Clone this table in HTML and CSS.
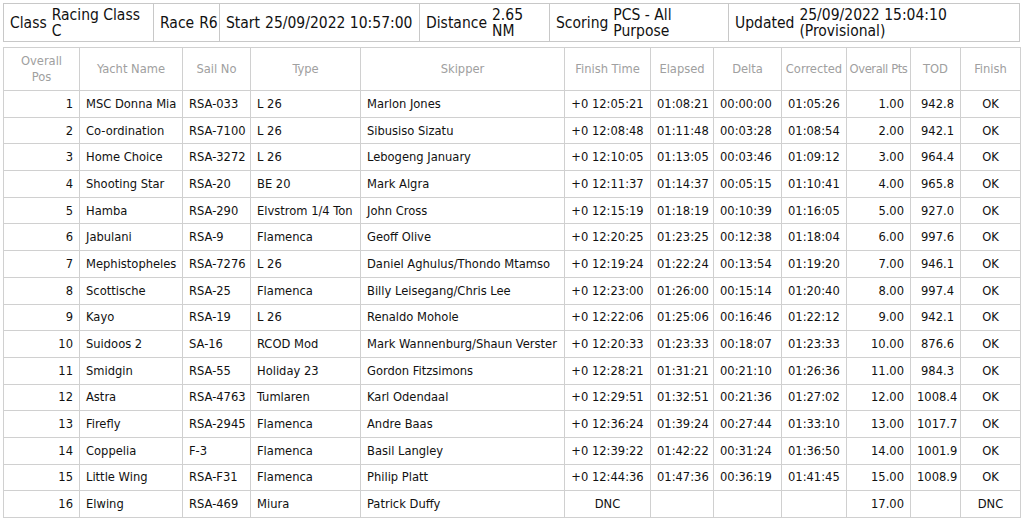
FILE: index.html
```html
<!DOCTYPE html>
<html>
<head>
<meta charset="utf-8">
<link rel="stylesheet" href="styles.css">
</head>
<body>
<div class="info">
  <div class="info-cell c-class"><span class="lbl">Class</span><span class="val">Racing Class C</span></div>
  <div class="info-cell c-race"><span class="lbl">Race</span><span class="val">R6</span></div>
  <div class="info-cell c-start"><span class="lbl">Start</span><span class="val">25/09/2022 10:57:00</span></div>
  <div class="info-cell c-dist"><span class="lbl">Distance</span><span class="val">2.65 NM</span></div>
  <div class="info-cell c-scor"><span class="lbl">Scoring</span><span class="val">PCS - All Purpose</span></div>
  <div class="info-cell c-upd"><span class="lbl">Updated</span><span class="val">25/09/2022 15:04:10 (Provisional)</span></div>
</div>
<table class="results">
  <colgroup>
    <col class="w76"><col class="w103"><col class="w68"><col class="w110"><col class="w204"><col class="w86"><col class="w63"><col class="w68"><col class="w65"><col class="w64"><col class="w50"><col class="w60">
  </colgroup>
  <thead>
    <tr><th class="wrap">Overall Pos</th><th>Yacht Name</th><th>Sail No</th><th>Type</th><th>Skipper</th><th>Finish Time</th><th>Elapsed</th><th>Delta</th><th>Corrected</th><th class="nw">Overall Pts</th><th>TOD</th><th>Finish</th></tr>
  </thead>
  <tbody>
    <tr><td class="r">1</td><td>MSC Donna Mia</td><td>RSA-033</td><td>L 26</td><td>Marlon Jones</td><td class="c">+0 12:05:21</td><td>01:08:21</td><td>00:00:00</td><td>01:05:26</td><td class="r">1.00</td><td class="r">942.8</td><td class="c">OK</td></tr>
    <tr><td class="r">2</td><td>Co-ordination</td><td>RSA-7100</td><td>L 26</td><td>Sibusiso Sizatu</td><td class="c">+0 12:08:48</td><td>01:11:48</td><td>00:03:28</td><td>01:08:54</td><td class="r">2.00</td><td class="r">942.1</td><td class="c">OK</td></tr>
    <tr><td class="r">3</td><td>Home Choice</td><td>RSA-3272</td><td>L 26</td><td>Lebogeng January</td><td class="c">+0 12:10:05</td><td>01:13:05</td><td>00:03:46</td><td>01:09:12</td><td class="r">3.00</td><td class="r">964.4</td><td class="c">OK</td></tr>
    <tr><td class="r">4</td><td>Shooting Star</td><td>RSA-20</td><td>BE 20</td><td>Mark Algra</td><td class="c">+0 12:11:37</td><td>01:14:37</td><td>00:05:15</td><td>01:10:41</td><td class="r">4.00</td><td class="r">965.8</td><td class="c">OK</td></tr>
    <tr><td class="r">5</td><td>Hamba</td><td>RSA-290</td><td>Elvstrom 1/4 Ton</td><td>John Cross</td><td class="c">+0 12:15:19</td><td>01:18:19</td><td>00:10:39</td><td>01:16:05</td><td class="r">5.00</td><td class="r">927.0</td><td class="c">OK</td></tr>
    <tr><td class="r">6</td><td>Jabulani</td><td>RSA-9</td><td>Flamenca</td><td>Geoff Olive</td><td class="c">+0 12:20:25</td><td>01:23:25</td><td>00:12:38</td><td>01:18:04</td><td class="r">6.00</td><td class="r">997.6</td><td class="c">OK</td></tr>
    <tr><td class="r">7</td><td>Mephistopheles</td><td>RSA-7276</td><td>L 26</td><td>Daniel Aghulus/Thondo Mtamso</td><td class="c">+0 12:19:24</td><td>01:22:24</td><td>00:13:54</td><td>01:19:20</td><td class="r">7.00</td><td class="r">946.1</td><td class="c">OK</td></tr>
    <tr><td class="r">8</td><td>Scottische</td><td>RSA-25</td><td>Flamenca</td><td>Billy Leisegang/Chris Lee</td><td class="c">+0 12:23:00</td><td>01:26:00</td><td>00:15:14</td><td>01:20:40</td><td class="r">8.00</td><td class="r">997.4</td><td class="c">OK</td></tr>
    <tr><td class="r">9</td><td>Kayo</td><td>RSA-19</td><td>L 26</td><td>Renaldo Mohole</td><td class="c">+0 12:22:06</td><td>01:25:06</td><td>00:16:46</td><td>01:22:12</td><td class="r">9.00</td><td class="r">942.1</td><td class="c">OK</td></tr>
    <tr><td class="r">10</td><td>Suidoos 2</td><td>SA-16</td><td>RCOD Mod</td><td>Mark Wannenburg/Shaun Verster</td><td class="c">+0 12:20:33</td><td>01:23:33</td><td>00:18:07</td><td>01:23:33</td><td class="r">10.00</td><td class="r">876.6</td><td class="c">OK</td></tr>
    <tr><td class="r">11</td><td>Smidgin</td><td>RSA-55</td><td>Holiday 23</td><td>Gordon Fitzsimons</td><td class="c">+0 12:28:21</td><td>01:31:21</td><td>00:21:10</td><td>01:26:36</td><td class="r">11.00</td><td class="r">984.3</td><td class="c">OK</td></tr>
    <tr><td class="r">12</td><td>Astra</td><td>RSA-4763</td><td>Tumlaren</td><td>Karl Odendaal</td><td class="c">+0 12:29:51</td><td>01:32:51</td><td>00:21:36</td><td>01:27:02</td><td class="r">12.00</td><td class="r">1008.4</td><td class="c">OK</td></tr>
    <tr><td class="r">13</td><td>Firefly</td><td>RSA-2945</td><td>Flamenca</td><td>Andre Baas</td><td class="c">+0 12:36:24</td><td>01:39:24</td><td>00:27:44</td><td>01:33:10</td><td class="r">13.00</td><td class="r">1017.7</td><td class="c">OK</td></tr>
    <tr><td class="r">14</td><td>Coppelia</td><td>F-3</td><td>Flamenca</td><td>Basil Langley</td><td class="c">+0 12:39:22</td><td>01:42:22</td><td>00:31:24</td><td>01:36:50</td><td class="r">14.00</td><td class="r">1001.9</td><td class="c">OK</td></tr>
    <tr><td class="r">15</td><td>Little Wing</td><td>RSA-F31</td><td>Flamenca</td><td>Philip Platt</td><td class="c">+0 12:44:36</td><td>01:47:36</td><td>00:36:19</td><td>01:41:45</td><td class="r">15.00</td><td class="r">1008.9</td><td class="c">OK</td></tr>
    <tr><td class="r">16</td><td>Elwing</td><td>RSA-469</td><td>Miura</td><td>Patrick Duffy</td><td class="c">DNC</td><td></td><td></td><td></td><td class="r">17.00</td><td class="r"></td><td class="c">DNC</td></tr>
  </tbody>
</table>
</body>
</html>
```
FILE: styles.css
```css
html, body {
  margin: 0;
  padding: 0;
  background: #fff;
}
body {
  padding: 3px 3px 0 3px;
  font-family: "DejaVu Sans Condensed", "DejaVu Sans", sans-serif;
  color: #111;
}
.info {
  display: flex;
  width: 1017px;
  height: 39px;
  box-sizing: border-box;
  border: 1px solid #c8c8c8;
  font-size: 15.5px;
  line-height: 16px;
}
.info-cell {
  display: flex;
  align-items: center;
  gap: 5px;
  padding: 0 6px;
  box-sizing: border-box;
  border-right: 1px solid #c8c8c8;
  overflow: hidden;
}
.info-cell:last-child { border-right: none; }
.c-class { width: 150px; }
.c-race { width: 66px; }
.c-start { width: 200px; }
.c-dist { width: 130px; }
.c-scor { width: 179px; }
.c-upd { flex: 1; }
.lbl { flex: none; }
.val { min-width: 0; }
.w76 { width: 76px; }
.w103 { width: 103px; }
.w68 { width: 68px; }
.w110 { width: 110px; }
.w204 { width: 204px; }
.w86 { width: 86px; }
.w63 { width: 63px; }
.w65 { width: 65px; }
.w64 { width: 64px; }
.w50 { width: 50px; }
.w60 { width: 60px; }
.results {
  margin-top: 5px;
  width: 1018px;
  table-layout: fixed;
  border-collapse: collapse;
  font-size: 12.8px;
  line-height: 16px;
}
.results th, .results td {
  border: 1px solid #d0d0d0;
  padding: 0 6px;
  white-space: nowrap;
  overflow: hidden;
}
.results th {
  height: 43px;
  padding: 0 2px;
  font-weight: normal;
  color: #a0a0a0;
  text-align: center;
  white-space: normal;
  box-sizing: border-box;
}
.results th.wrap { padding: 0 12px; }
.results th.nw {
  white-space: nowrap;
  padding: 0;
  letter-spacing: -0.4px;
}
.results td {
  height: 26.7px;
  box-sizing: border-box;
  text-align: left;
}
.results td.r { text-align: right; }
.results td.c { text-align: center; }
```
